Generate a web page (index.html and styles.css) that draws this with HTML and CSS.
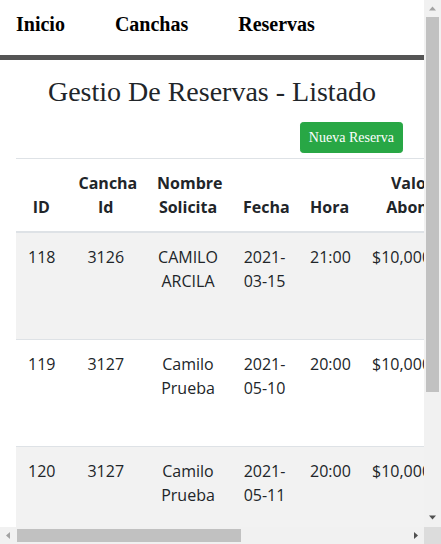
FILE: index.html
```html
<!DOCTYPE html>
<html lang="es">
<head>
<meta charset="utf-8">
<title>Gestio De Reservas - Listado</title>
<link rel="stylesheet" href="styles.css">
</head>
<body>
<div class="screen">
  <div class="viewport">
    <nav class="topnav">
      <a class="nav-link" href="#">Inicio</a>
      <a class="nav-link" href="#">Canchas</a>
      <a class="nav-link" href="#">Reservas</a>
    </nav>
    <div class="nav-rule"></div>
    <h3 class="title">Gestio De Reservas - Listado</h3>
    <div class="actions">
      <button class="btn-new" type="button">Nueva Reserva</button>
    </div>
    <div class="table-wrap">
      <table class="table">
        <colgroup>
          <col class="c-id"><col class="c-cancha"><col class="c-nombre"><col class="c-fecha"><col class="c-hora"><col class="c-valor"><col class="c-acciones">
        </colgroup>
        <thead>
          <tr><th>ID</th><th>Cancha Id</th><th>Nombre Solicita</th><th>Fecha</th><th>Hora</th><th>Valor Abono</th><th>Acciones</th></tr>
        </thead>
        <tbody>
          <tr class="striped">
            <td>118</td><td>3126</td><td>CAMILO ARCILA</td><td>2021-03-15</td><td>21:00</td><td class="money">$10,000.00</td>
            <td><div class="row-actions"><button class="btn-sm edit" type="button">Editar</button><button class="btn-sm del" type="button">Eliminar</button></div></td>
          </tr>
          <tr>
            <td>119</td><td>3127</td><td>Camilo Prueba</td><td>2021-05-10</td><td>20:00</td><td class="money">$10,000.00</td>
            <td><div class="row-actions"><button class="btn-sm edit" type="button">Editar</button><button class="btn-sm del" type="button">Eliminar</button></div></td>
          </tr>
          <tr class="striped">
            <td>120</td><td>3127</td><td>Camilo Prueba</td><td>2021-05-11</td><td>20:00</td><td class="money">$10,000.00</td>
            <td><div class="row-actions"><button class="btn-sm edit" type="button">Editar</button><button class="btn-sm del" type="button">Eliminar</button></div></td>
          </tr>
        </tbody>
      </table>
    </div>
  </div>
  <div class="vscroll">
    <div class="sb-btn"><svg width="17" height="17" viewBox="0 0 17 17"><polygon points="5,10.5 12,10.5 8.5,6.5" fill="#a3a3a3"/></svg></div>
    <div class="vtrack"><div class="vthumb"></div></div>
    <div class="sb-btn"><svg width="17" height="17" viewBox="0 0 17 17"><polygon points="5,5.5 12,5.5 8.5,9.5" fill="#505050"/></svg></div>
  </div>
  <div class="hscroll">
    <div class="sb-btn"><svg width="17" height="17" viewBox="0 0 17 17"><polygon points="10,5 10,12 6,8.5" fill="#a3a3a3"/></svg></div>
    <div class="htrack"><div class="hthumb"></div></div>
    <div class="sb-btn"><svg width="17" height="17" viewBox="0 0 17 17"><polygon points="7,5 7,12 11,8.5" fill="#505050"/></svg></div>
  </div>
  <div class="corner"></div>
</div>
</body>
</html>
```
FILE: styles.css
```css
html, body {
  margin: 0;
  padding: 0;
  background: #fff;
}
.screen {
  width: 441px;
  height: 544px;
  display: grid;
  grid-template-columns: 424px 17px;
  grid-template-rows: 527px 17px;
  overflow: hidden;
}
.viewport {
  overflow: hidden;
  background: #fff;
  color: #212529;
}
.topnav {
  height: 55px;
  box-sizing: border-box;
  padding: 13px 0 0 16px;
  display: flex;
  gap: 50px;
}
.nav-link {
  font-family: "Liberation Serif", "Times New Roman", serif;
  font-size: 20px;
  font-weight: 700;
  line-height: 23px;
  color: #000;
  text-decoration: none;
}
.nav-rule {
  height: 5px;
  background: #555;
}
.title {
  margin: 15px 0 0;
  font-family: "Liberation Serif", "Times New Roman", serif;
  font-size: 28px;
  font-weight: 400;
  line-height: 34px;
  text-align: center;
  color: #212529;
}
.actions {
  display: flex;
  justify-content: flex-end;
  padding: 13px 21px 0 0;
  margin-bottom: 5px;
}
.btn-new {
  font-family: "Liberation Serif", "Times New Roman", serif;
  font-size: 14px;
  line-height: 21px;
  padding: 4px 8px;
  color: #fff;
  background: #28a745;
  border: 1px solid #28a745;
  border-radius: 3.2px;
}
.table-wrap {
  padding-left: 16px;
}
.table {
  table-layout: fixed;
  width: 607px;
  border-collapse: collapse;
  font-family: "Open Sans", "Noto Sans", sans-serif;
  font-size: 16px;
  line-height: 24px;
  color: #212529;
}
.c-id { width: 50.5px; }
.c-cancha { width: 78.5px; }
.c-nombre { width: 86px; }
.c-fecha { width: 67px; }
.c-hora { width: 61px; }
.c-valor { width: 106px; }
.c-acciones { width: 158px; }
.table th,
.table td {
  padding: 12px;
  text-align: center;
  border-top: 1px solid #dee2e6;
}
.table th {
  font-weight: 700;
  vertical-align: bottom;
  border-bottom: 2px solid #dee2e6;
}
.table td {
  vertical-align: top;
}
.table td.money {
  text-align: left;
  padding-left: 13px;
}
.striped td {
  background: #f2f2f2;
}
.row-actions {
  display: flex;
  flex-direction: column;
  align-items: center;
  gap: 20px;
  height: 82px;
}
.btn-sm {
  font-family: "Liberation Serif", "Times New Roman", serif;
  font-size: 14px;
  line-height: 21px;
  padding: 4px 8px;
  color: #fff;
  border-radius: 3.2px;
}
.btn-sm.edit { background: #007bff; border: 1px solid #007bff; }
.btn-sm.del { background: #dc3545; border: 1px solid #dc3545; }
.vscroll {
  grid-row: 1 / 2;
  grid-column: 2 / 3;
  background: #f1f1f1;
  display: flex;
  flex-direction: column;
}
.hscroll {
  grid-row: 2 / 3;
  grid-column: 1 / 2;
  background: #f1f1f1;
  display: flex;
}
.sb-btn {
  width: 17px;
  height: 17px;
  flex: none;
}
.sb-btn svg { display: block; }
.vtrack {
  flex: 1;
  padding: 0 2px;
}
.vthumb {
  height: 375px;
  background: #c1c1c1;
}
.htrack {
  flex: 1;
  padding: 2px 0;
}
.hthumb {
  width: 224px;
  height: 13px;
  background: #c1c1c1;
}
.corner {
  grid-row: 2 / 3;
  grid-column: 2 / 3;
  background: #dcdcdc;
}
```
